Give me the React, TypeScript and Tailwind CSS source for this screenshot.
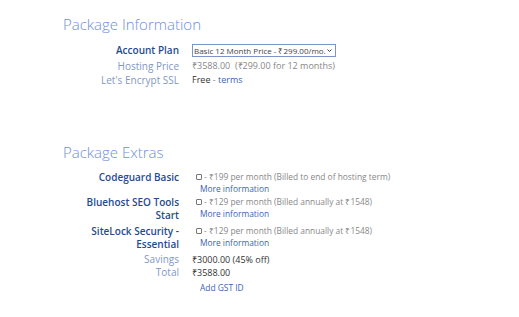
import React from "react";

const font = { fontFamily: '"Open Sans", "Liberation Sans", sans-serif' };

function Row({
  label,
  strong,
  children,
  className = "",
}: {
  label: React.ReactNode;
  strong?: boolean;
  children: React.ReactNode;
  className?: string;
}) {
  return (
    <div className={"flex shrink-0 " + className}>
      <div
        className={
          "w-[130px] shrink-0 text-right pr-[13px] leading-[13px] " +
          (strong ? "text-[#1f4b8f] text-[10px] font-semibold" : "text-[#7f98c8] text-[10px]")
        }
      >
        {label}
      </div>
      <div className="text-[9px] text-[#888] leading-[12px] whitespace-nowrap">{children}</div>
    </div>
  );
}

function Box() {
  return <span className="inline-block w-[6px] h-[6px] border border-[#777] rounded-[1px] ml-[4px] mr-[2px] bg-white" />;
}

function Extra({ text }: { text: string }) {
  return (
    <div className="text-[8.4px]">
      <div className="flex items-center h-[12px]">
        <Box />
        {text}
      </div>
      <div className="pl-[8px] h-[12px] text-[#3b63b7]">More information</div>
    </div>
  );
}

export default function App() {
  return (
    <div className="w-[519px] h-[317px] bg-white overflow-hidden flex flex-col" style={font}>
      <div className="pl-[63px] pt-[14px]">
        <h2 className="text-[15px] font-light text-[#6c8fdb] leading-[20px]">Package Information</h2>
      </div>
      <div className="pl-[62px] mt-[8px] flex flex-col">
        <Row label="Account Plan" strong className="h-[17px] items-center">
          <div className="relative w-[144px] h-[13px] border border-[#7b93c8] flex items-center pl-[1px] text-[#444] text-[8px] leading-[11px]">
            <span>Basic 12 Month Price - ₹299.00/mo.</span>
            <svg className="absolute right-[3px] top-[4px]" width="5" height="3" viewBox="0 0 5 3">
              <path d="M0.5 0.5 L2.5 2.5 L4.5 0.5" fill="none" stroke="#444" strokeWidth="1" />
            </svg>
          </div>
        </Row>
        <Row label="Hosting Price" className="h-[14px] items-center">
          <span className="leading-[14px]">₹3588.00&nbsp; (₹299.00 for 12 months)</span>
        </Row>
        <Row label="Let's Encrypt SSL" className="h-[14px] items-center">
          <span className="leading-[14px]">
            <span className="text-[#333]">Free</span> - <span className="text-[#3b63b7]">terms</span>
          </span>
        </Row>
      </div>
      <div className="pl-[63px] mt-[55px]">
        <h2 className="text-[15px] font-light text-[#6c8fdb] leading-[20px]">Package Extras</h2>
      </div>
      <div className="pl-[62px] mt-[9px] flex flex-col">
        <Row label="Codeguard Basic" strong className="h-[25px]">
          <Extra text="- ₹199 per month (Billed to end of hosting term)" />
        </Row>
        <Row label={<>Bluehost SEO Tools<br />Start</>} strong className="h-[29px]">
          <Extra text="- ₹129 per month (Billed annually at ₹1548)" />
        </Row>
        <Row label={<>SiteLock Security -<br />Essential</>} strong className="h-[28px]">
          <Extra text="- ₹129 per month (Billed annually at ₹1548)" />
        </Row>
        <Row label="Savings" className="h-[13px] items-center">
          <span className="text-[#333]">₹3000.00 (45% off)</span>
        </Row>
        <Row label="Total" className="h-[15px]">
          <span className="text-[#333] leading-[13px]">₹3588.00</span>
        </Row>
        <Row label="" className="h-[13px] items-center">
          <div className="pl-[8px] text-[8.4px] text-[#3b63b7]">Add GST ID</div>
        </Row>
      </div>
    </div>
  );
}
